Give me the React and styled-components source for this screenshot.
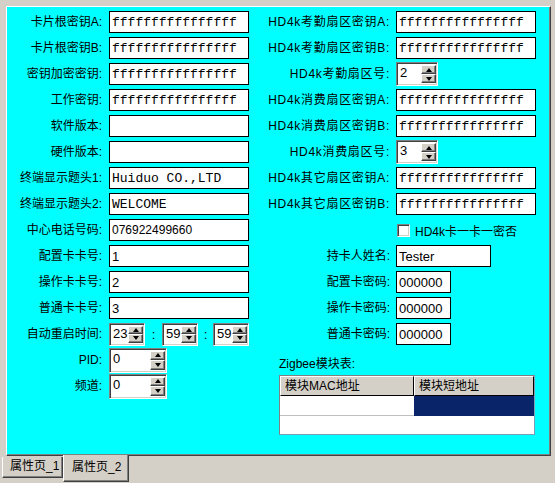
import styled, { createGlobalStyle } from "styled-components";

const GlobalStyle = createGlobalStyle`
  html, body {
    margin: 0;
    padding: 0;
    background: #d4d0c8;
  }
  * {
    box-sizing: border-box;
  }
`;

const UI_FONT = `"Liberation Sans", "Noto Sans CJK SC", sans-serif`;

const Page = styled.div`
  width: 555px;
  height: 483px;
  background: #d4d0c8;
  overflow: hidden;
  font-family: ${UI_FONT};
  font-size: 12px;
  color: #000;
`;

const Panel = styled.div`
  margin: 6px 4px 0 6px;
  height: 450px;
  background: #00ffff;
  border: 1px solid;
  border-color: #ffffff #404040 #404040 #ffffff;
  box-shadow: inset -1px -1px 0 #808080;
  padding-top: 4px;
  display: flex;
`;

const Column = styled.div`
  display: flex;
  flex-direction: column;
  margin-left: ${(p) => p.$offset || 0}px;
`;

const FormGrid = styled.div`
  display: grid;
  grid-template-columns: ${(p) => p.$label}px auto;
  column-gap: ${(p) => p.$gap}px;
  row-gap: 4px;
  grid-auto-rows: 22px;
  align-items: center;
`;

const Label = styled.div`
  text-align: right;
  white-space: nowrap;
  line-height: 14px;
  letter-spacing: ${(p) => (p.$wide ? "0.7px" : "0")};
`;

const TextBox = styled.div`
  width: ${(p) => p.$w || 140}px;
  height: 22px;
  background: #fff;
  border: 1px solid #000;
  padding: 0 2px;
  display: flex;
  align-items: center;
  white-space: nowrap;
  overflow: hidden;
  font-family: ${(p) =>
    p.$mono ? `"Liberation Mono", "DejaVu Sans Mono", monospace` : UI_FONT};
  font-size: ${(p) => (p.$mono ? "13px" : p.$big ? "13px" : "12px")};
`;

const SpinBox = styled.div`
  width: ${(p) => p.$w}px;
  height: ${(p) => p.$h}px;
  display: flex;
  background: #fff;
  border: 1px solid;
  border-color: #808080 #ffffff #ffffff #808080;
  box-shadow: inset 1px 1px 0 #404040, inset -1px -1px 0 #d4d0c8;
  padding: 2px 1px 2px 2px;
`;

const SpinValue = styled.div`
  flex: 1;
  font-size: 13px;
  line-height: 15px;
  padding-left: 1px;
`;

const SpinButtons = styled.div`
  width: 15px;
  display: flex;
  flex-direction: column;
`;

const SpinButton = styled.div`
  flex: 1;
  background: #d4d0c8;
  border: 1px solid;
  border-color: #ffffff #404040 #404040 #ffffff;
  box-shadow: inset -1px -1px 0 #808080;
  display: flex;
  align-items: center;
  justify-content: center;
`;

const Arrow = styled.span`
  width: 0;
  height: 0;
  border-left: 3.5px solid transparent;
  border-right: 3.5px solid transparent;
  ${(p) =>
    p.$down
      ? "border-top: 4px solid #000;"
      : "border-bottom: 4px solid #000;"}
`;

const TimeRow = styled.div`
  display: flex;
  align-items: center;
`;

const Colon = styled.span`
  width: ${(p) => p.$w}px;
  text-align: center;
  font-size: 13px;
`;

const CheckRow = styled.label`
  display: flex;
  align-items: center;
  gap: 5px;
  padding-left: 1px;
  white-space: nowrap;
`;

const CheckBox = styled.span`
  width: 13px;
  height: 13px;
  background: #fff;
  border: 1px solid;
  border-color: #808080 #ffffff #ffffff #808080;
  box-shadow: inset 1px 1px 0 #404040, inset -1px -1px 0 #d4d0c8;
`;

const Zigbee = styled.div`
  margin: 12px 0 0 24px;
`;

const ZigbeeTitle = styled.div`
  line-height: 14px;
  margin-bottom: 4px;
`;

const Table = styled.div`
  width: 256px;
  height: 60px;
  background: #fff;
  border: 1px solid;
  border-color: #808080 #7f9db9 #7f9db9 #808080;
`;

const TRow = styled.div`
  display: flex;
  height: ${(p) => p.$h}px;
`;

const HeadCell = styled.div`
  width: ${(p) => p.$w}px;
  background: #d4d0c8;
  border-bottom: 1px solid #000;
  border-right: 1px solid #000;
  border-left: 1px solid #fff;
  border-top: 1px solid #fff;
  padding: 2px 0 0 4px;
  line-height: 15px;
  white-space: nowrap;
`;

const Cell = styled.div`
  width: ${(p) => p.$w}px;
  background: ${(p) => (p.$selected ? "#0a246a" : "#fff")};
  border-bottom: 1px solid ${(p) => (p.$selected ? "#0a246a" : "#c0c0c0")};
`;

const TabStrip = styled.div`
  display: flex;
  align-items: flex-start;
  padding-left: 2px;
`;

const Tab = styled.div`
  position: relative;
  z-index: ${(p) => (p.$active ? 1 : 0)};
  width: ${(p) => (p.$active ? 66 : 61)}px;
  height: ${(p) => (p.$active ? 27 : 21)}px;
  margin-top: ${(p) => (p.$active ? -1 : 1)}px;
  background: #d4d0c8;
  border-left: 1px solid #fff;
  border-right: 1px solid #404040;
  border-bottom: 1px solid #404040;
  box-shadow: inset -1px -1px 0 #808080;
  font-size: 12px;
  line-height: 17px;
  padding: ${(p) => (p.$active ? "4px 0 0 8px" : "1px 0 0 7px")};
  white-space: nowrap;
`;

function Spinner({ value, w, h }) {
  return (
    <SpinBox $w={w} $h={h}>
      <SpinValue>{value}</SpinValue>
      <SpinButtons>
        <SpinButton>
          <Arrow />
        </SpinButton>
        <SpinButton>
          <Arrow $down />
        </SpinButton>
      </SpinButtons>
    </SpinBox>
  );
}

const KEY = "ffffffffffffffff";

function App() {
  return (
    <>
      <GlobalStyle />
      <Page>
        <Panel>
          <Column>
            <FormGrid $label={95} $gap={7}>
              <Label>卡片根密钥A:</Label>
              <TextBox $mono>{KEY}</TextBox>
              <Label>卡片根密钥B:</Label>
              <TextBox $mono>{KEY}</TextBox>
              <Label>密钥加密密钥:</Label>
              <TextBox $mono>{KEY}</TextBox>
              <Label>工作密钥:</Label>
              <TextBox $mono>{KEY}</TextBox>
              <Label>软件版本:</Label>
              <TextBox />
              <Label>硬件版本:</Label>
              <TextBox />
              <Label>终端显示题头1:</Label>
              <TextBox $mono>Huiduo CO.,LTD</TextBox>
              <Label>终端显示题头2:</Label>
              <TextBox $mono>WELCOME</TextBox>
              <Label>中心电话号码:</Label>
              <TextBox>076922499660</TextBox>
              <Label>配置卡卡号:</Label>
              <TextBox $big>1</TextBox>
              <Label>操作卡卡号:</Label>
              <TextBox $big>2</TextBox>
              <Label>普通卡卡号:</Label>
              <TextBox $big>3</TextBox>
              <Label>自动重启时间:</Label>
              <TimeRow>
                <Spinner value="23" w={36} h={23} />
                <Colon $w={17}>:</Colon>
                <Spinner value="59" w={36} h={23} />
                <Colon $w={15}>:</Colon>
                <Spinner value="59" w={36} h={23} />
              </TimeRow>
              <Label>PID:</Label>
              <Spinner value="0" w={58} h={25} />
              <Label>频道:</Label>
              <Spinner value="0" w={58} h={25} />
            </FormGrid>
          </Column>
          <Column $offset={6}>
            <FormGrid $label={135} $gap={6}>
              <Label $wide>HD4k考勤扇区密钥A:</Label>
              <TextBox $mono>{KEY}</TextBox>
              <Label $wide>HD4k考勤扇区密钥B:</Label>
              <TextBox $mono>{KEY}</TextBox>
              <Label $wide>HD4k考勤扇区号:</Label>
              <Spinner value="2" w={42} h={24} />
              <Label $wide>HD4k消费扇区密钥A:</Label>
              <TextBox $mono>{KEY}</TextBox>
              <Label $wide>HD4k消费扇区密钥B:</Label>
              <TextBox $mono>{KEY}</TextBox>
              <Label $wide>HD4k消费扇区号:</Label>
              <Spinner value="3" w={42} h={24} />
              <Label $wide>HD4k其它扇区密钥A:</Label>
              <TextBox $mono>{KEY}</TextBox>
              <Label $wide>HD4k其它扇区密钥B:</Label>
              <TextBox $mono>{KEY}</TextBox>
              <span />
              <CheckRow>
                <CheckBox />
                HD4k卡一卡一密否
              </CheckRow>
              <Label>持卡人姓名:</Label>
              <TextBox $w={95} $big>Tester</TextBox>
              <Label>配置卡密码:</Label>
              <TextBox $w={55} $big>000000</TextBox>
              <Label>操作卡密码:</Label>
              <TextBox $w={55} $big>000000</TextBox>
              <Label>普通卡密码:</Label>
              <TextBox $w={55} $big>000000</TextBox>
            </FormGrid>
            <Zigbee>
              <ZigbeeTitle>Zigbee模块表:</ZigbeeTitle>
              <Table>
                <TRow $h={20}>
                  <HeadCell $w={134}>模块MAC地址</HeadCell>
                  <HeadCell $w={120}>模块短地址</HeadCell>
                </TRow>
                <TRow $h={20}>
                  <Cell $w={134} />
                  <Cell $w={120} $selected />
                </TRow>
              </Table>
            </Zigbee>
          </Column>
        </Panel>
        <TabStrip>
          <Tab>属性页_1</Tab>
          <Tab $active>属性页_2</Tab>
        </TabStrip>
      </Page>
    </>
  );
}

export default App;
